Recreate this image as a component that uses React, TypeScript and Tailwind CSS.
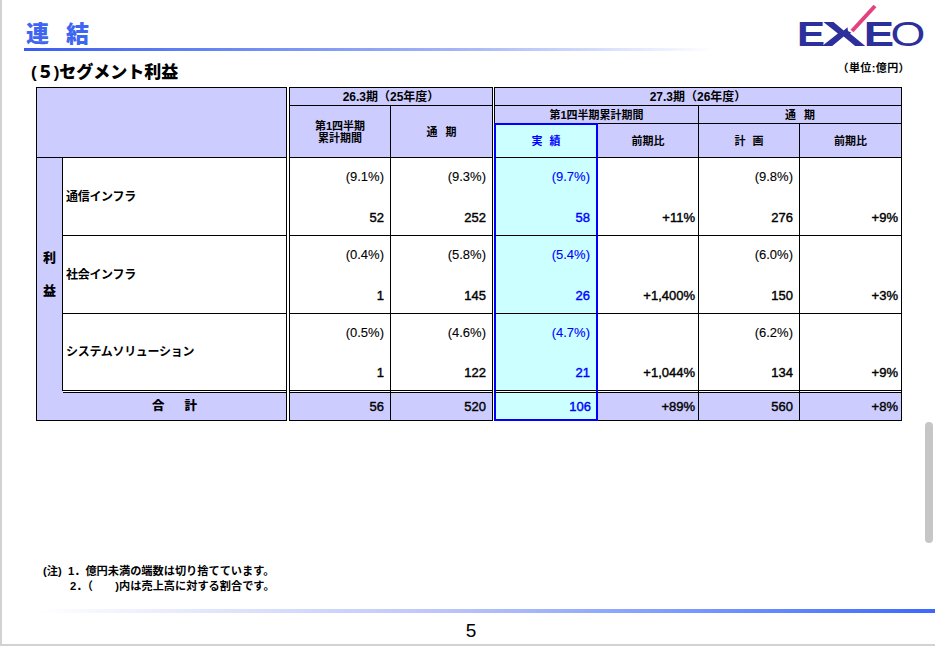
import React from "react";

const F = "font-['Liberation_Sans','Noto_Sans_CJK_JP',sans-serif]";

type Row = {
  name: string;
  q: [string, string];
  y: [string, string];
  a: [string, string];
  yoy: string;
  p: [string, string];
  pyoy: string;
};

const rows: Row[] = [
  { name: "通信インフラ", q: ["(9.1%)", "52"], y: ["(9.3%)", "252"], a: ["(9.7%)", "58"], yoy: "+11%", p: ["(9.8%)", "276"], pyoy: "+9%" },
  { name: "社会インフラ", q: ["(0.4%)", "1"], y: ["(5.8%)", "145"], a: ["(5.4%)", "26"], yoy: "+1,400%", p: ["(6.0%)", "150"], pyoy: "+3%" },
  { name: "システムソリューション", q: ["(0.5%)", "1"], y: ["(4.6%)", "122"], a: ["(4.7%)", "21"], yoy: "+1,044%", p: ["(6.2%)", "134"], pyoy: "+9%" },
];

const rowStart = ["row-start-4", "row-start-5", "row-start-6"];

const numCell =
  "flex flex-col justify-between items-end pt-[11px] pb-[10px] pr-[6px] text-[13px] leading-[15px]";
const endCell = "flex flex-col justify-end items-end pb-[10px] pr-[3px] text-[13px] leading-[15px]";
const hdr = "bg-[#ccccff] flex items-center justify-center font-bold text-[11px] leading-[12px]";
const tot =
  "bg-[#ccccff] flex items-center justify-end text-[13px] leading-[15px] border-t border-r border-b border-black [-webkit-text-stroke:0.4px]";
const pct = "[-webkit-text-stroke:0.1px]";
const num = "[-webkit-text-stroke:0.4px]";

function Logo() {
  return (
    <svg width="126" height="44" viewBox="0 0 126 44" className="mt-[4px] mr-[11px]">
      <g fontFamily="Liberation Sans, Arial, sans-serif" fill="#2d2f9b">
        <text transform="translate(-1 42) scale(1.2 1)" fontWeight="700" fontSize="35">E</text>
        <text transform="translate(23.6 42) scale(1.9 1)" fontWeight="700" fontSize="35">X</text>
      </g>
      <polygon points="47,6 74,6 74,31 60,32 50,27" fill="#ffffff" />
      <g fontFamily="Liberation Sans, Arial, sans-serif" fill="#2d2f9b">
        <text transform="translate(65.7 42) scale(1.3 1)" fontWeight="700" fontSize="35">E</text>
        <text transform="translate(92.5 42) scale(1.28 1)" fontWeight="400" fontSize="35">O</text>
      </g>
      <line x1="54" y1="27" x2="77" y2="2" stroke="#e3417f" strokeWidth="4" />
    </svg>
  );
}

export default function App() {
  return (
    <div className={`relative w-[935px] h-[648px] bg-white overflow-hidden text-black ${F}`}>
      <div className="h-[646px] border-l-2 border-b-2 border-[#d2d2d2] flex flex-col">
        {/* header */}
        <div className="flex justify-between h-[48px]">
          <div className="pl-[24px] pt-[23px] text-[23px] leading-[23px] font-black text-[#3e66f2] flex">
            <span>連</span>
            <span className="ml-[17px]">結</span>
          </div>
          <Logo />
        </div>
        <div className="ml-[22px] h-[3px] w-[690px] bg-linear-to-r from-[#3a5cf2] via-[#a3b3f6] via-[62%] to-white" />

        {/* title */}
        <div className="h-[36px] flex justify-between items-start">
          <div className="pl-[29px] pt-[12px] text-[17px] leading-[19px] font-black">(５)セグメント利益</div>
          <div className="pr-[25px] pt-[11px] text-[11px] leading-[12px] font-bold tracking-[0.4px]">（単位:億円）</div>
        </div>

        {/* table */}
        <div className="ml-[34px] w-[866px] grid grid-cols-[27px_224px_2px_102px_102px_1px_104px_101px_101px_102px] grid-rows-[19px_18px_34px_78px_78px_77px_1px_29px]">
          <div className="col-start-1 col-span-2 row-start-1 row-span-3 border border-black bg-[#ccccff]" />
          <div className={`col-start-4 col-span-2 row-start-1 border border-black ${hdr} text-[12px]`}>26.3期（25年度）</div>
          <div className={`col-start-7 col-span-4 row-start-1 border border-black ${hdr} text-[12px]`}>27.3期（26年度）</div>

          <div className={`col-start-4 row-start-2 row-span-2 border-l border-r border-b border-black flex-col ${hdr}`}>
            <span>第1四半期</span>
            <span>累計期間</span>
          </div>
          <div className={`col-start-5 row-start-2 row-span-2 border-r border-b border-black ${hdr}`}>
            <span>通</span>
            <span className="ml-[8px]">期</span>
          </div>
          <div className={`col-start-7 col-span-2 row-start-2 border-l border-r border-b border-black ${hdr}`}>
            第1四半期累計期間
          </div>
          <div className={`col-start-9 col-span-2 row-start-2 border-r border-b border-black ${hdr}`}>
            <span>通</span>
            <span className="ml-[8px]">期</span>
          </div>

          <div className="col-start-7 row-start-3 -mt-px border-x-2 border-t-2 border-[#0000ff] border-b border-b-black bg-[#ccffff] text-[#0000ff] flex items-center justify-center font-bold text-[11px] leading-[12px]">
            <span>実</span>
            <span className="ml-[7px]">績</span>
          </div>
          <div className={`col-start-8 row-start-3 border-r border-b border-black ${hdr}`}>前期比</div>
          <div className={`col-start-9 row-start-3 border-r border-b border-black ${hdr}`}>
            <span>計</span>
            <span className="ml-[7px]">画</span>
          </div>
          <div className={`col-start-10 row-start-3 border-r border-b border-black ${hdr}`}>前期比</div>

          {/* 利益 */}
          <div className="col-start-1 row-start-4 row-span-3 border-l border-r border-black bg-[#ccccff] flex flex-col items-center justify-center gap-[19px] text-[13px] leading-[14px] font-black">
            <span>利</span>
            <span>益</span>
          </div>

          {rows.map((r, i) => (
            <React.Fragment key={r.name}>
              <div className={`col-start-2 ${rowStart[i]} border-r border-b border-black flex items-center pl-[3px] text-[12px] font-bold tracking-[-0.3px]`}>
                {r.name}
              </div>
              <div className={`col-start-4 ${rowStart[i]} border-l border-r border-b border-black ${numCell}`}>
                <span className={pct}>{r.q[0]}</span>
                <span className={num}>{r.q[1]}</span>
              </div>
              <div className={`col-start-5 ${rowStart[i]} border-r border-b border-black ${numCell}`}>
                <span className={pct}>{r.y[0]}</span>
                <span className={num}>{r.y[1]}</span>
              </div>
              <div className={`col-start-7 ${rowStart[i]} border-x-2 border-[#0000ff] border-b border-b-black bg-[#ccffff] text-[#0000ff] ${numCell} pr-[5px]`}>
                <span className={pct}>{r.a[0]}</span>
                <span className={num}>{r.a[1]}</span>
              </div>
              <div className={`col-start-8 ${rowStart[i]} border-r border-b border-black ${endCell}`}>
                <span className={num}>{r.yoy}</span>
              </div>
              <div className={`col-start-9 ${rowStart[i]} border-r border-b border-black ${numCell}`}>
                <span className={pct}>{r.p[0]}</span>
                <span className={num}>{r.p[1]}</span>
              </div>
              <div className={`col-start-10 ${rowStart[i]} border-r border-b border-black ${endCell}`}>
                <span className={num}>{r.pyoy}</span>
              </div>
            </React.Fragment>
          ))}

          {/* spacer row for double line */}
          <div className="col-start-1 row-start-7 row-span-2 border-l border-b border-black bg-[#ccccff]" />
          <div className="col-start-2 row-start-7 border-r border-black" />
          <div className="col-start-4 row-start-7 border-x border-black" />
          <div className="col-start-5 row-start-7 border-r border-black" />
          <div className="col-start-7 row-start-7 border-x-2 border-[#0000ff]" />
          <div className="col-start-8 row-start-7 border-r border-black" />
          <div className="col-start-9 row-start-7 border-r border-black" />
          <div className="col-start-10 row-start-7 border-r border-black" />

          {/* total */}
          <div className="col-start-2 row-start-8 border-t border-r border-b border-black bg-[#ccccff] flex items-center justify-center text-[12.5px] font-black">
            <span>合</span>
            <span className="ml-[20px]">計</span>
          </div>
          <div className={`col-start-4 row-start-8 border-l ${tot} pr-[6px]`}>56</div>
          <div className={`col-start-5 row-start-8 ${tot} pr-[6px]`}>520</div>
          <div className="col-start-7 row-start-8 border-x-2 border-b-2 border-[#0000ff] border-t border-t-black bg-[#ccffff] text-[#0000ff] flex items-center justify-end pr-[5px] text-[13px] leading-[15px] [-webkit-text-stroke:0.4px]">
            106
          </div>
          <div className={`col-start-8 row-start-8 ${tot} pr-[3px]`}>+89%</div>
          <div className={`col-start-9 row-start-8 ${tot} pr-[6px]`}>560</div>
          <div className={`col-start-10 row-start-8 ${tot} pr-[3px]`}>+8%</div>
        </div>

        {/* notes */}
        <div className="mt-[143px] pl-[41px] w-fit grid grid-cols-[25px_auto] text-[11.2px] leading-[15px] font-bold">
          <span className="whitespace-nowrap">(注)</span>
          <span>1．億円未満の端数は切り捨てています。</span>
          <span />
          <span className="pl-[2px]">2．（　　)内は売上高に対する割合です。</span>
        </div>

        {/* bottom bar */}
        <div className="mt-[14.5px] ml-[36px] h-[4px] bg-linear-to-r from-white via-[#bcc5f9] via-[45%] to-[#3c66ff]" />

        <div className="mt-[8.5px] pl-[5px] text-center text-[19px] leading-[19px]">5</div>
      </div>

      {/* scrollbar */}
      <div className="absolute right-[2px] top-[422px] w-[8px] h-[121px] rounded-full bg-[#c6c6c6]" />
    </div>
  );
}
